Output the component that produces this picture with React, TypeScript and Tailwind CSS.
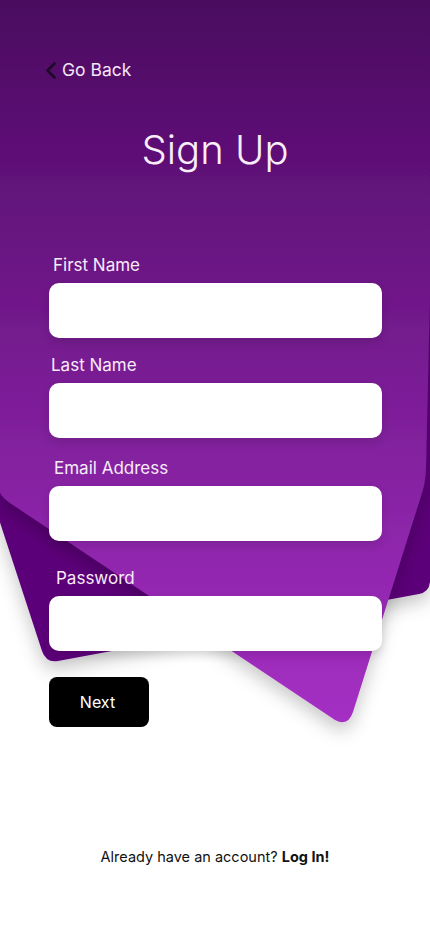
import React from "react";

function Field({ label, labelClass, topClass }: { label: string; labelClass: string; topClass: string }) {
  return (
    <div className={`flex flex-col ${topClass}`}>
      <label className={`text-[17px] leading-[24px] text-[#f8ebfa] ${labelClass}`}>{label}</label>
      <div className="mt-[6px] ml-[49px] h-[55px] w-[333px] rounded-[10px] bg-white shadow-[0_4px_10px_rgba(0,0,0,0.12)]" />
    </div>
  );
}

export default function App() {
  return (
    <div className="relative min-h-[932px] w-full overflow-hidden bg-white font-['Inter',sans-serif]">
      <svg className="absolute left-0 top-0" width="430" height="780" viewBox="0 0 430 780">
        <defs>
          <linearGradient id="lg" x1="0" y1="0" x2="0" y2="730" gradientUnits="userSpaceOnUse">
            <stop offset="0" stopColor="#4a0860" />
            <stop offset="1" stopColor="#a630c5" />
          </linearGradient>
          <filter id="sh" x="-20%" y="-20%" width="140%" height="140%">
            <feDropShadow dx="0" dy="8" stdDeviation="9" floodColor="#000" floodOpacity="0.22" />
          </filter>
        </defs>
        <path
          d="M -40 20 L 440 20 L 430 582 Q 429 592 419 594 L 58 661 Q 46 663 42 651 L -40 400 Z"
          fill="#5b0679"
          filter="url(#sh)"
        />
        <path
          d="M -10 -30 L 440 -30 L 431 250 L 426 468 Q 425.5 484 421 496 L 353 712 Q 348 727 335 720 L 10 503 Q -2 495 -2 485 L -10 -30 Z"
          fill="url(#lg)"
          filter="url(#sh)"
        />
      </svg>

      <div className="relative flex flex-col">
        <div className="flex items-center pl-[45px] pt-[58px]">
          <svg width="12" height="17" viewBox="0 0 12 17" className="mt-[1px]">
            <polyline points="9.5,1.5 2.5,8.5 9.5,15.5" fill="none" stroke="#1e0a28" strokeWidth="2.6" strokeLinecap="round" strokeLinejoin="round" />
          </svg>
          <span className="ml-[5px] text-[17.5px] leading-[24px] text-[#f6e6f8]">Go Back</span>
        </div>

        <h1 className="mt-[44px] text-center text-[40px] font-light leading-[48px] text-[#f8eefa]">Sign Up</h1>

        <Field label="First Name" labelClass="ml-[53px]" topClass="mt-[79px]" />
        <Field label="Last Name" labelClass="ml-[51px]" topClass="mt-[15px]" />
        <Field label="Email Address" labelClass="ml-[54px]" topClass="mt-[18px]" />
        <Field label="Password" labelClass="ml-[56px]" topClass="mt-[25px]" />

        <button className="ml-[49px] mt-[26px] flex h-[50px] w-[100px] items-center justify-center rounded-[8px] bg-black text-[16px] text-white">
          <span className="-ml-[3px]">Next</span>
        </button>

        <p className="mt-[120px] text-center text-[14.5px] leading-[20px] text-[#111]">
          Already have an account? <span className="font-bold">Log In!</span>
        </p>
      </div>
    </div>
  );
}
